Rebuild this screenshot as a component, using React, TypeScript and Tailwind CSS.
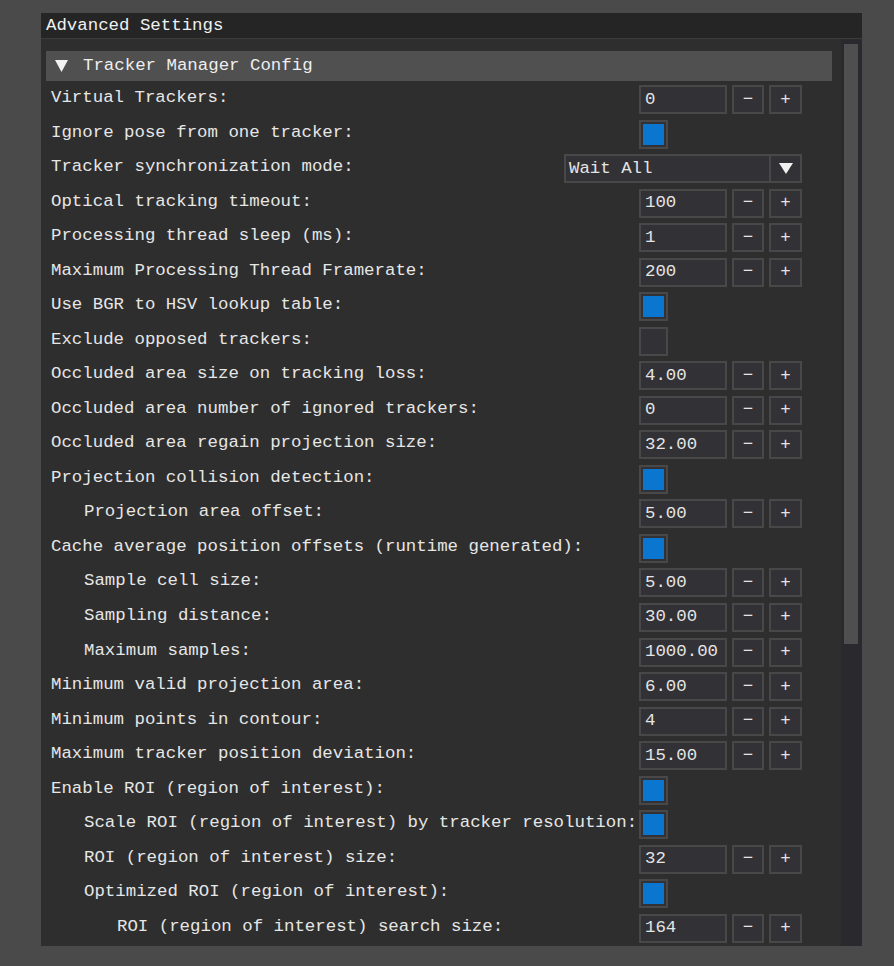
import React from 'react';

type Control =
  | { kind: 'input'; value: string }
  | { kind: 'check'; checked: boolean }
  | { kind: 'combo'; value: string };

interface SettingRow {
  label: string;
  indent: number;
  control: Control;
}

const ROWS: SettingRow[] = [
  { label: 'Virtual Trackers:', indent: 0, control: { kind: 'input', value: '0' } },
  { label: 'Ignore pose from one tracker:', indent: 0, control: { kind: 'check', checked: true } },
  { label: 'Tracker synchronization mode:', indent: 0, control: { kind: 'combo', value: 'Wait All' } },
  { label: 'Optical tracking timeout:', indent: 0, control: { kind: 'input', value: '100' } },
  { label: 'Processing thread sleep (ms):', indent: 0, control: { kind: 'input', value: '1' } },
  { label: 'Maximum Processing Thread Framerate:', indent: 0, control: { kind: 'input', value: '200' } },
  { label: 'Use BGR to HSV lookup table:', indent: 0, control: { kind: 'check', checked: true } },
  { label: 'Exclude opposed trackers:', indent: 0, control: { kind: 'check', checked: false } },
  { label: 'Occluded area size on tracking loss:', indent: 0, control: { kind: 'input', value: '4.00' } },
  { label: 'Occluded area number of ignored trackers:', indent: 0, control: { kind: 'input', value: '0' } },
  { label: 'Occluded area regain projection size:', indent: 0, control: { kind: 'input', value: '32.00' } },
  { label: 'Projection collision detection:', indent: 0, control: { kind: 'check', checked: true } },
  { label: 'Projection area offset:', indent: 1, control: { kind: 'input', value: '5.00' } },
  { label: 'Cache average position offsets (runtime generated):', indent: 0, control: { kind: 'check', checked: true } },
  { label: 'Sample cell size:', indent: 1, control: { kind: 'input', value: '5.00' } },
  { label: 'Sampling distance:', indent: 1, control: { kind: 'input', value: '30.00' } },
  { label: 'Maximum samples:', indent: 1, control: { kind: 'input', value: '1000.00' } },
  { label: 'Minimum valid projection area:', indent: 0, control: { kind: 'input', value: '6.00' } },
  { label: 'Minimum points in contour:', indent: 0, control: { kind: 'input', value: '4' } },
  { label: 'Maximum tracker position deviation:', indent: 0, control: { kind: 'input', value: '15.00' } },
  { label: 'Enable ROI (region of interest):', indent: 0, control: { kind: 'check', checked: true } },
  { label: 'Scale ROI (region of interest) by tracker resolution:', indent: 1, control: { kind: 'check', checked: true } },
  { label: 'ROI (region of interest) size:', indent: 1, control: { kind: 'input', value: '32' } },
  { label: 'Optimized ROI (region of interest):', indent: 1, control: { kind: 'check', checked: true } },
  { label: 'ROI (region of interest) search size:', indent: 2, control: { kind: 'input', value: '164' } },
];

const INDENT_PAD = ['pl-[5px]', 'pl-[38px]', 'pl-[71px]'];

// frame look shared by inputs, buttons, checkbox and combo
const FRAME = 'h-[29px] border-2 border-[#484848] bg-[#323236]';

function StepButton({ sign, width }: { sign: string; width: string }) {
  return (
    <div className={`${FRAME} ${width} flex items-center justify-center text-[#e4e4e4]`}>
      {sign}
    </div>
  );
}

function ControlView({ control }: { control: Control }) {
  if (control.kind === 'check') {
    return (
      <div className={`${FRAME} w-[29px] p-[2px]`}>
        {control.checked && <div className="w-full h-full bg-[#0a76cf]" />}
      </div>
    );
  }

  if (control.kind === 'combo') {
    return (
      <div className={`${FRAME} w-[238px] flex`}>
        <div className="flex-1 pl-[3px] flex items-center text-[#e4e4e4]">{control.value}</div>
        <div className="w-[31px] border-l-2 border-[#484848] flex items-center justify-center">
          <svg width="14" height="11" viewBox="0 0 14 11">
            <polygon points="0,0 14,0 7,11" fill="#f0f0f0" />
          </svg>
        </div>
      </div>
    );
  }

  return (
    <div className="flex gap-[5px]">
      <div className={`${FRAME} w-[88px] pl-[4px] flex items-center text-[#e4e4e4]`}>
        {control.value}
      </div>
      <StepButton sign="−" width="w-[32px]" />
      <StepButton sign="+" width="w-[33px]" />
    </div>
  );
}

function Row({ row }: { row: SettingRow }) {
  // combo is wider and starts further left than the other controls
  const labelWidth = row.control.kind === 'combo' ? 'w-[518px]' : 'w-[593px]';
  return (
    <div className="h-[34.54px] flex items-start">
      <div
        className={`${labelWidth} ${INDENT_PAD[row.indent]} shrink-0 pt-[3px] whitespace-nowrap text-[#e6e6e6]`}
      >
        {row.label}
      </div>
      <ControlView control={row.control} />
    </div>
  );
}

export default function App() {
  return (
    <div
      className="w-[894px] h-[966px] bg-[#4a4a4a] pl-[41px] pt-[13px] overflow-hidden text-[17.4px] leading-[20px]"
      style={{ fontFamily: '"Liberation Mono", "DejaVu Sans Mono", monospace' }}
    >
      <div className="w-[821px] h-[933px] flex flex-col bg-[#2e2e2e]">
        {/* Title bar */}
        <div className="h-[26px] shrink-0 bg-[#252525] border-b border-[#3c3c3c] pl-[5px] pt-[3px] text-[#f0f0f0]">
          Advanced Settings
        </div>

        <div className="flex-1 flex min-h-0">
          {/* Main content */}
          <div className="flex-1 pl-[5px] pr-[9px] pt-[12px] overflow-hidden">
            <div className="h-[30px] bg-[#505050] flex items-center pl-[9px] text-[#eeeeee]">
              <svg width="13" height="12" viewBox="0 0 13 12" className="mr-[15px]">
                <polygon points="0,0 13,0 6.5,12" fill="#f2f2f2" />
              </svg>
              <span>Tracker Manager Config</span>
            </div>

            <div className="mt-[4px]">
              {ROWS.map((row) => (
                <Row key={row.label} row={row} />
              ))}
            </div>
          </div>

          {/* Scrollbar */}
          <div className="w-[21px] shrink-0 bg-[#2a2a2e] pl-[3px] pr-[4px] pt-[5px]">
            <div className="h-[600px] bg-[#4f4f4f]" />
          </div>
        </div>
      </div>
    </div>
  );
}
